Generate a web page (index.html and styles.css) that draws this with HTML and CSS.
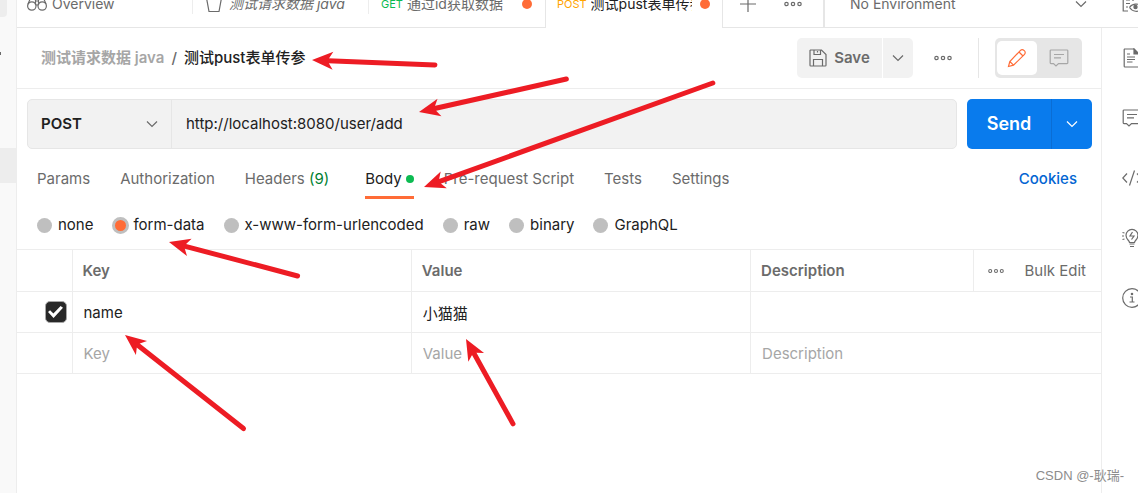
FILE: index.html
```html
<!DOCTYPE html>
<html lang="zh-CN">
<head>
<meta charset="utf-8">
<meta name="viewport" content="width=device-width, initial-scale=1">
<title>测试pust表单传参</title>
<link rel="stylesheet" href="styles.css">
</head>
<body>
<svg class="sprite" aria-hidden="true">
  <symbol id="chevron" viewBox="0 0 12 8"><path d="M1 1.5l5 5 5-5"/></symbol>
  <symbol id="dots" viewBox="0 0 18 6"><circle cx="2.5" cy="3" r="1.7"/><circle cx="9" cy="3" r="1.7"/><circle cx="15.5" cy="3" r="1.7"/></symbol>
  <symbol id="comment" viewBox="0 0 20 20"><path d="M2 2h16a.8.8 0 0 1 .8.8v12a.8.8 0 0 1-.8.8H9.500l-2.500 2.400-2.500-2.400H2a.8.8 0 0 1-.8-.8v-12A.8.8 0 0 1 2 2zM5 6.500h10M5 9.800h7"/></symbol>
</svg>

<div class="app">
  <aside class="side">
    <span class="side-top"></span>
    <span class="side-tick"></span>
    <span class="side-current"></span>
  </aside>

  <div class="workspace">
    <header class="topbar">
      <nav class="tabs">
        <a class="tab" href="#overview"><span class="tab-in">
          <svg class="icon ico20" viewBox="0 0 20 20"><circle cx="4.800" cy="12" r="4.200"/><circle cx="15.200" cy="12" r="4.200"/><path d="M1 10L4 3h3l1.500 2.500V11M19 10l-3-7h-3l-1.500 2.500V11M8.500 7h3M8.800 11h2.400"/></svg>
          <span class="tab-name wide">Overview</span></span></a>
        <a class="tab" href="#collection"><span class="tab-in second">
          <svg class="icon ico18" viewBox="0 0 18 18"><path d="M0 3h18M1.500 3L4 16.500h10L16.500 3"/></svg>
          <em class="tab-name wide">测试请求数据 java</em></span></a>
        <a class="tab" href="#get"><span class="tab-in request"><b class="verb get">GET</b>
          <span class="tab-name">通过id获取数据</span><i class="unsaved"></i></span></a>
        <a class="tab active" href="#post"><span class="tab-in request"><b class="verb post">POST</b>
          <span class="tab-name">测试pust表单传参</span><i class="unsaved"></i></span></a>
      </nav>
      <div class="tab-tools">
        <button class="plain" aria-label="New tab"><svg class="icon ico18" viewBox="0 0 18 18"><path d="M9 1v16M1 9h16"/></svg></button>
        <button class="plain" aria-label="Tab options"><svg class="icon dots"><use href="#dots"/></svg></button>
      </div>
      <div class="env">
        <button class="env-pick">No Environment <svg class="icon chev"><use href="#chevron"/></svg></button>
        <button class="plain env-eye" aria-label="Environment quick look"><svg class="icon ico20" viewBox="0 0 20 20"><path d="M18 7V2H1.200v15H6M4 6h4M4 9.500h4M4 13h2M11 2v5M7.500 13.500c2-3.500 9-5 12-1M7.500 13.500c3 4.500 9 5 12 1.500"/><circle class="solid" cx="13.500" cy="13" r="1.600"/></svg></button>
      </div>
    </header>

    <div class="below">
      <main class="main">
        <div class="title-row">
          <h1 class="crumbs"><a href="#collection">测试请求数据 java</a><span>/</span><strong>测试pust表单传参</strong></h1>
          <div class="save-group">
            <button class="save"><svg class="icon ico18" viewBox="0 0 18 18"><path d="M1.500 1h11L17 5.500v10.700a.8.8 0 0 1-.8.8H1.800a.8.8 0 0 1-.8-.8V1.500zM5 1v4.500h6.500V1M8.500 2v1.500M4.500 17v-6.500h9V17"/></svg>Save</button>
            <button class="save-more" aria-label="Save options"><svg class="icon chev"><use href="#chevron"/></svg></button>
          </div>
          <button class="plain more" aria-label="More actions"><svg class="icon dots"><use href="#dots"/></svg></button>
          <div class="mode">
            <button class="mode-btn on" aria-label="Edit"><svg class="icon ico20" viewBox="0 0 20 20"><path d="M1.500 18.500l1.300-5L13.500 2.300a2.400 2.400 0 0 1 3.400 0l.6.6a2.400 2.400 0 0 1 0 3.400L6.500 17.200zM12 4l4 4M2.800 13.500l3.700 3.700"/></svg></button>
            <button class="mode-btn" aria-label="Comments"><svg class="icon ico20"><use href="#comment"/></svg></button>
          </div>
        </div>

        <form class="url-row">
          <div class="url-box">
            <label class="method"><select aria-label="Method"><option>POST</option><option>GET</option></select><svg class="icon chev"><use href="#chevron"/></svg></label>
            <input class="url" aria-label="Request URL" value="http://localhost:8080/user/add">
          </div>
          <div class="send-group">
            <button type="button" class="send">Send</button>
            <button type="button" class="send-more" aria-label="Send options"><svg class="icon chev"><use href="#chevron"/></svg></button>
          </div>
        </form>

        <nav class="sections">
          <a href="#params">Params</a>
          <a href="#auth">Authorization</a>
          <a class="headers" href="#headers">Headers <span class="count">(9)</span></a>
          <a class="current" href="#body">Body<i class="filled"></i></a>
          <a href="#pre">Pre-request Script</a>
          <a href="#tests">Tests</a>
          <a href="#settings">Settings</a>
          <a class="cookies" href="#cookies">Cookies</a>
        </nav>

        <div class="kinds">
          <label><input type="radio" name="kind">none</label>
          <label><input type="radio" name="kind" checked>form-data</label>
          <label><input type="radio" name="kind">x-www-form-urlencoded</label>
          <label><input type="radio" name="kind">raw</label>
          <label><input type="radio" name="kind">binary</label>
          <label><input type="radio" name="kind">GraphQL</label>
        </div>

        <table class="params">
          <colgroup><col class="c-check"><col class="c-third"><col class="c-third"><col><col class="c-tools"></colgroup>
          <thead>
            <tr><th></th><th>Key</th><th>Value</th><th>Description</th>
              <th><div class="bulk"><button class="plain" aria-label="Columns"><svg class="icon dots small"><use href="#dots"/></svg></button><button class="plain">Bulk Edit</button></div></th></tr>
          </thead>
          <tbody>
            <tr><td><input type="checkbox" class="tick" aria-label="Include name" checked></td>
              <td><input class="cell" aria-label="Key" value="name"></td>
              <td><input class="cell" aria-label="Value" value="小猫猫"></td>
              <td colspan="2"><input class="cell" aria-label="Description"></td></tr>
            <tr><td></td>
              <td><input class="cell" aria-label="New key" placeholder="Key"></td>
              <td><input class="cell" aria-label="New value" placeholder="Value"></td>
              <td colspan="2"><input class="cell" aria-label="New description" placeholder="Description"></td></tr>
          </tbody>
        </table>
      </main>

      <aside class="rail">
        <button class="plain" aria-label="Documentation"><svg class="icon ico20" viewBox="0 0 20 20"><path d="M2.500 1H12l5 5v12.200a.8.8 0 0 1-.8.800H3a.8.8 0 0 1-.8-.8V1.500zM5 6h3M5 9h8M5 11.500h8M5 14h5.500"/><path class="solid" d="M12 1l5 5h-5z"/></svg></button>
        <button class="plain" aria-label="Comments"><svg class="icon ico20"><use href="#comment"/></svg></button>
        <button class="plain" aria-label="Code"><svg class="icon ico20" viewBox="0 0 20 20"><path d="M5 5.500L.8 10 5 14.500M12.500 2.500L7.500 17.500M15 5.500l4.200 4.500-4.200 4.500"/></svg></button>
        <button class="plain" aria-label="Related requests"><svg class="icon ico20" viewBox="0 0 20 20"><path d="M7.500 14.500c0-2-3.500-3-3.500-7.200a6 6 0 0 1 12 0c0 4.200-3.500 5.200-3.500 7.200zM7.500 16h5M8 18.500h4M.5 4.500l2 .5M0 8h2M.5 11.500l2-.5M10.500 4L8 8h4l-2.500 3.500"/></svg></button>
        <button class="plain" aria-label="Info"><svg class="icon ico20" viewBox="0 0 20 20"><circle cx="10" cy="10" r="9.300"/><path d="M8 9h2.300v5M7.500 14h5"/><circle class="solid" cx="10" cy="6" r=".7"/></svg></button>
      </aside>
    </div>
  </div>
</div>

<svg class="arrows" aria-hidden="true">
  <defs><path id="head" d="M0 0L21-9 17-2.500V2.500L21 9z"/></defs>
  <g transform="translate(312 60) rotate(2.300)"><use href="#head"/><path d="M16 0H123"/></g>
  <g transform="translate(419 112) rotate(-12.600)"><use href="#head"/><path d="M16 0H151"/></g>
  <g transform="translate(424 187) rotate(-19.800)"><use href="#head"/><path d="M16 0H307"/></g>
  <g transform="translate(169 242) rotate(14.800)"><use href="#head"/><path d="M16 0H133"/></g>
  <g transform="translate(125 335) rotate(38.300)"><use href="#head"/><path d="M16 0H151"/></g>
  <g transform="translate(466 339) rotate(61)"><use href="#head"/><path d="M16 0H97"/></g>
</svg>
<div class="credit">CSDN @-耿瑞-</div>
</body>
</html>
```
FILE: styles.css
```css
* { box-sizing: border-box; }
body {
  margin: 0;
  background: #fff;
  color: #212121;
  font: 15px/20px Inter, "Noto Sans CJK SC", sans-serif;
}
a { color: inherit; text-decoration: none; }
button, input, select { font: inherit; color: inherit; }
button {
  border: 0;
  padding: 0;
  background: none;
  display: flex;
  align-items: center;
  justify-content: center;
}
.plain { color: #6b6b6b; flex: none; }
.sprite { position: absolute; width: 0; height: 0; }

.icon { fill: none; stroke: currentColor; stroke-width: 1.2; flex: none; display: block; }
.icon .solid { fill: currentColor; }
.ico20 { width: 20px; height: 20px; }
.ico18 { width: 18px; height: 18px; }
.chev { width: 12px; height: 8px; }
.dots { width: 18px; height: 6px; }
.dots.small { width: 16px; }

.app { display: flex; min-height: 100vh; overflow: hidden; }
.side {
  flex: none;
  width: 17px;
  background: #f9f9f9;
  border-right: 1px solid #ededed;
  display: flex;
  flex-direction: column;
}
.side-top { width: 7px; height: 17px; background: #ededed; border-radius: 0 0 4px 0; }
.side-tick { width: 1px; height: 3px; margin-top: 35px; background: #6b6b6b; }
.side-current { height: 35px; margin-top: 93px; background: #ededed; }
.workspace { flex: 1; min-width: 0; display: flex; flex-direction: column; }

.topbar {
  display: flex;
  align-items: flex-end;
  height: 28px;
  overflow: hidden;
  color: #6b6b6b;
}
.tabs { display: flex; flex: none; }
.tab {
  display: flex;
  align-items: center;
  width: 176px;
  height: 48px;
  border-bottom: 1px solid #e6e6e6;
}
.tab-in {
  flex: 1;
  min-width: 0;
  height: 20px;
  display: flex;
  align-items: center;
  gap: 5px;
  padding: 0 12px 0 10px;
  border-right: 1px solid #ededed;
}
.second { gap: 6px; padding-left: 12px; }
.request { padding-left: 12px; gap: 4px; }
.tab:nth-child(3) .tab-in { border-color: transparent; }
.tab-name { flex: 1; min-width: 0; overflow: hidden; white-space: nowrap; font-size: 14px; }
.tab.active { width: 178px; color: #212121; border: solid #e6e6e6; border-width: 0 1px; }
.active .tab-in { border: 0; padding-left: 11px; }
.verb { font-size: 11px; font-weight: 400; }
.get { color: #0cbb52; }
.post { color: #ffa400; }
.unsaved { width: 10px; height: 10px; border-radius: 50%; background: #ff6c37; margin-left: 4px; }
.tab-tools {
  flex: none;
  width: 100px;
  height: 48px;
  display: flex;
  align-items: center;
  gap: 27px;
  padding-left: 16px;
  border-bottom: 1px solid #e6e6e6;
}
.env {
  flex: 1;
  display: flex;
  align-items: center;
  gap: 35px;
  height: 48px;
  padding-left: 25px;
  border-left: 2px solid #e6e6e6;
  border-bottom: 1px solid #e6e6e6;
  font-size: 14px;
}
.env-pick { flex: 1; justify-content: space-between; }
.env-eye { width: 16px; justify-content: flex-start; }

.below { flex: 1; display: flex; }
.main { flex: 1; min-width: 0; }
.title-row {
  display: flex;
  align-items: center;
  height: 61px;
  padding: 0 19px 0 24px;
  border-bottom: 1px solid #ededed;
}
.crumbs {
  flex: 1;
  display: flex;
  gap: 7px;
  margin: 0;
  font-size: 15px;
  font-weight: 600;
  color: #a6a6a6;
  white-space: nowrap;
}
.crumbs span { color: #6b6b6b; font-weight: 500; }
.crumbs strong { font-weight: 500; color: #212121; }
.save-group { display: flex; gap: 1px; }
.save, .save-more { height: 40px; background: #f2f2f2; color: #6b6b6b; }
.save { gap: 7px; width: 85px; font-weight: 600; border-radius: 5px 0 0 5px; }
.save-more { width: 30px; border-radius: 0 5px 5px 0; }
.more { width: 66px; height: 40px; padding-right: 5px; border-right: 1px solid #e6e6e6; }
.mode { display: flex; margin-left: 16px; padding: 3px 2px; background: #e6e6e6; border-radius: 5px; }
.mode-btn { width: 43px; height: 34px; color: #a6a6a6; }
.mode-btn.on { width: 40px; color: #ff6c37; background: #fff; border-radius: 5px; }

.url-row { display: flex; gap: 10px; padding: 10px 9px 0 10px; }
.url-box {
  flex: 1;
  display: flex;
  height: 50px;
  background: #f2f2f2;
  border: 1px solid #e6e6e6;
  border-radius: 5px;
}
.method {
  width: 144px;
  display: flex;
  align-items: center;
  padding: 0 13px;
  border-right: 1px solid #e6e6e6;
  color: #6b6b6b;
}
.method select {
  flex: 1;
  min-width: 0;
  appearance: none;
  border: 0;
  padding: 0;
  background: none;
  color: #212121;
  font-weight: 600;
}
.url { flex: 1; min-width: 0; border: 0; padding: 0 14px; background: none; }
.send-group { display: flex; color: #fff; border-radius: 5px; overflow: hidden; }
.send, .send-more { background: #097bed; }
.send { width: 84px; font-size: 18px; font-weight: 600; }
.send-more { width: 41px; border-left: 1px solid #0a6dd4; }

.sections {
  display: flex;
  gap: 30px;
  padding: 10px 24px 0 20px;
  color: #6b6b6b;
  white-space: nowrap;
}
.sections a { height: 40px; padding: 10px 0; }
.headers { margin-right: 6px; }
.count { color: #007f31; }
.sections .current {
  display: flex;
  align-items: center;
  gap: 4px;
  padding: 3px 0 0;
  border-bottom: 3px solid #ff6c37;
  color: #212121;
}
.filled { width: 8px; height: 8px; border-radius: 50%; background: #0cbb52; }
.sections .cookies { margin-left: auto; font-weight: 500; color: #0265d2; }

.kinds { display: flex; gap: 19px; height: 50px; align-items: center; padding: 2px 20px 0; }
.kinds label { display: flex; align-items: center; gap: 6px; white-space: nowrap; }
.kinds input { appearance: none; width: 15px; height: 15px; margin: 0; border-radius: 50%; background: #bfbfbf; }
.kinds input:checked { width: 17px; height: 17px; border: 3px solid #bfbfbf; background: #ff6c37; margin-right: -2px; }

.params { width: 100%; border-collapse: collapse; table-layout: fixed; }
.c-check { width: 55px; }
.c-third { width: 31.3%; }
.c-tools { width: 128px; }
.params th, .params td {
  height: 41px;
  padding: 0 10px;
  border: 1px solid #ededed;
  text-align: left;
}
.params th { height: 42px; color: #6b6b6b; font-weight: 600; }
.params th:first-child, .params td:first-child { border-left: 0; padding: 0 5px; text-align: right; }
.params th:last-child, .params td:last-child { border-right: 0; }
.bulk { display: flex; justify-content: space-between; padding: 0 5px 0 4px; font-weight: 400; }
.cell { display: block; width: 100%; height: 24px; border: 0; padding: 0 1px; background: none; }
.cell::placeholder { color: #a6a6a6; opacity: 1; }
.tick {
  appearance: none;
  display: block;
  width: 22px;
  height: 22px;
  margin: 0 0 0 auto;
  border: 1px solid #a6a6a6;
  border-radius: 5px;
}
.tick:checked {
  background: #282828;
  display: grid;
  place-items: center;
}
.tick:checked::before {
  content: "";
  width: 15px;
  height: 12px;
  background: #fff;
  clip-path: polygon(0 50%, 14% 35%, 36% 63%, 84% 0, 100% 15%, 37% 100%);
}

.rail {
  flex: none;
  width: 37px;
  padding: 20px 0 0 20px;
  display: flex;
  flex-direction: column;
  align-items: flex-start;
  gap: 40px;
  overflow: hidden;
  border-left: 1px solid #ededed;
}

.arrows {
  position: absolute;
  top: 0;
  left: 0;
  width: 760px;
  height: 450px;
  pointer-events: none;
  fill: #ed1c24;
  stroke: #ed1c24;
  stroke-width: 5;
  stroke-linecap: round;
}
.arrows use { stroke: none; }
.credit {
  position: absolute;
  right: 14px;
  bottom: 7px;
  color: #8c8c8c;
  font: 13px/20px "Liberation Sans", "Noto Sans CJK SC", sans-serif;
}
```
